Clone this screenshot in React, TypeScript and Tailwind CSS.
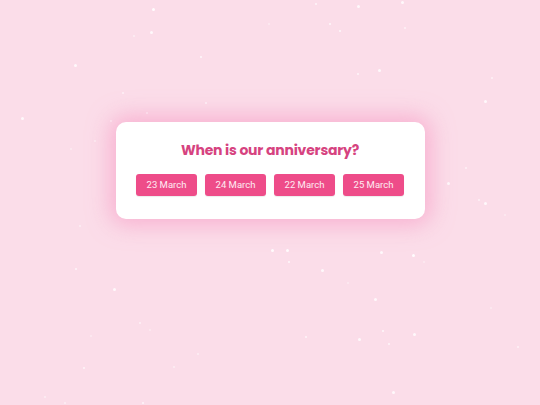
const sparkles: [number, number, number, number][] = [
  // x, y, size, opacity
  [152, 8, 3, 0.9], [150, 31, 2.5, 0.8], [133, 35, 1.5, 0.5], [74, 64, 2.5, 0.8],
  [200, 56, 2, 0.8], [315, 3, 2, 0.7], [357, 5, 2.5, 0.8], [401, 1, 2.5, 0.8],
  [329, 23, 2, 0.8], [339, 30, 2, 0.8], [268, 23, 1.5, 0.4], [404, 27, 2, 0.6],
  [357, 73, 2, 0.7], [378, 69, 2.5, 0.8], [491, 77, 2, 0.6], [484, 100, 2.5, 0.8],
  [122, 92, 2, 0.6], [205, 102, 2, 0.7], [146, 112, 2, 0.7], [21, 117, 2.5, 0.8],
  [110, 120, 2, 0.6], [94, 140, 1.5, 0.5], [70, 148, 1.5, 0.4], [465, 167, 2, 0.6],
  [447, 182, 2.5, 0.8], [484, 202, 2.5, 0.8], [478, 199, 1.5, 0.6], [504, 214, 1.5, 0.4],
  [79, 225, 1.5, 0.5], [271, 249, 3, 0.9], [286, 249, 3, 0.9], [288, 261, 2, 0.8],
  [380, 251, 2.5, 0.8], [412, 254, 2.5, 0.9], [423, 261, 1.5, 0.4], [321, 269, 2.5, 0.8],
  [75, 268, 2, 0.7], [113, 288, 2.5, 0.8], [374, 298, 2.5, 0.8], [347, 282, 1.5, 0.4],
  [139, 322, 2, 0.6], [149, 329, 1.5, 0.4], [305, 336, 2, 0.7], [358, 338, 2.5, 0.8],
  [382, 330, 2, 0.8], [413, 333, 2.5, 0.8], [388, 343, 2, 0.7], [517, 346, 2, 0.6],
  [197, 353, 1.5, 0.5], [83, 367, 2, 0.7], [173, 366, 1.5, 0.5], [392, 391, 2.5, 0.8],
  [44, 396, 1.5, 0.5], [64, 402, 1.5, 0.5], [142, 402, 2, 0.7], [90, 335, 1.5, 0.4],
  [490, 307, 1.5, 0.4],
];

const dates = ["23 March", "24 March", "22 March", "25 March"];

export default function App() {
  return (
    <div className="relative w-[540px] h-[405px] overflow-hidden bg-[#fbdde9]">
      {/* falling sparkles */}
      {sparkles.map(([x, y, s, o], i) => (
        <span
          key={i}
          className="absolute rounded-full bg-white"
          style={{ left: x, top: y, width: s, height: s, opacity: o }}
        />
      ))}

      <div className="relative flex justify-center pt-[122px]">
        <div className="w-[309px] rounded-[10px] bg-white pt-[16px] pb-[23px] shadow-[0_0_22px_6px_rgba(246,142,190,0.55)]">
          <h1 className="text-center text-[14px] leading-6 tracking-[-0.2px] font-bold text-[#d6437f] font-['Poppins','Lato',sans-serif]">
            When is our anniversary?
          </h1>
          <div className="mt-[12px] flex justify-center gap-[8px]">
            {dates.map((d) => (
              <button
                key={d}
                className="w-[61px] h-[22px] rounded-[3px] bg-[#ee4c89] text-[9.5px] text-white/90 font-['Roboto',sans-serif] shadow-[0_1px_1px_rgba(0,0,0,0.08)]"
              >
                {d}
              </button>
            ))}
          </div>
        </div>
      </div>
    </div>
  );
}
